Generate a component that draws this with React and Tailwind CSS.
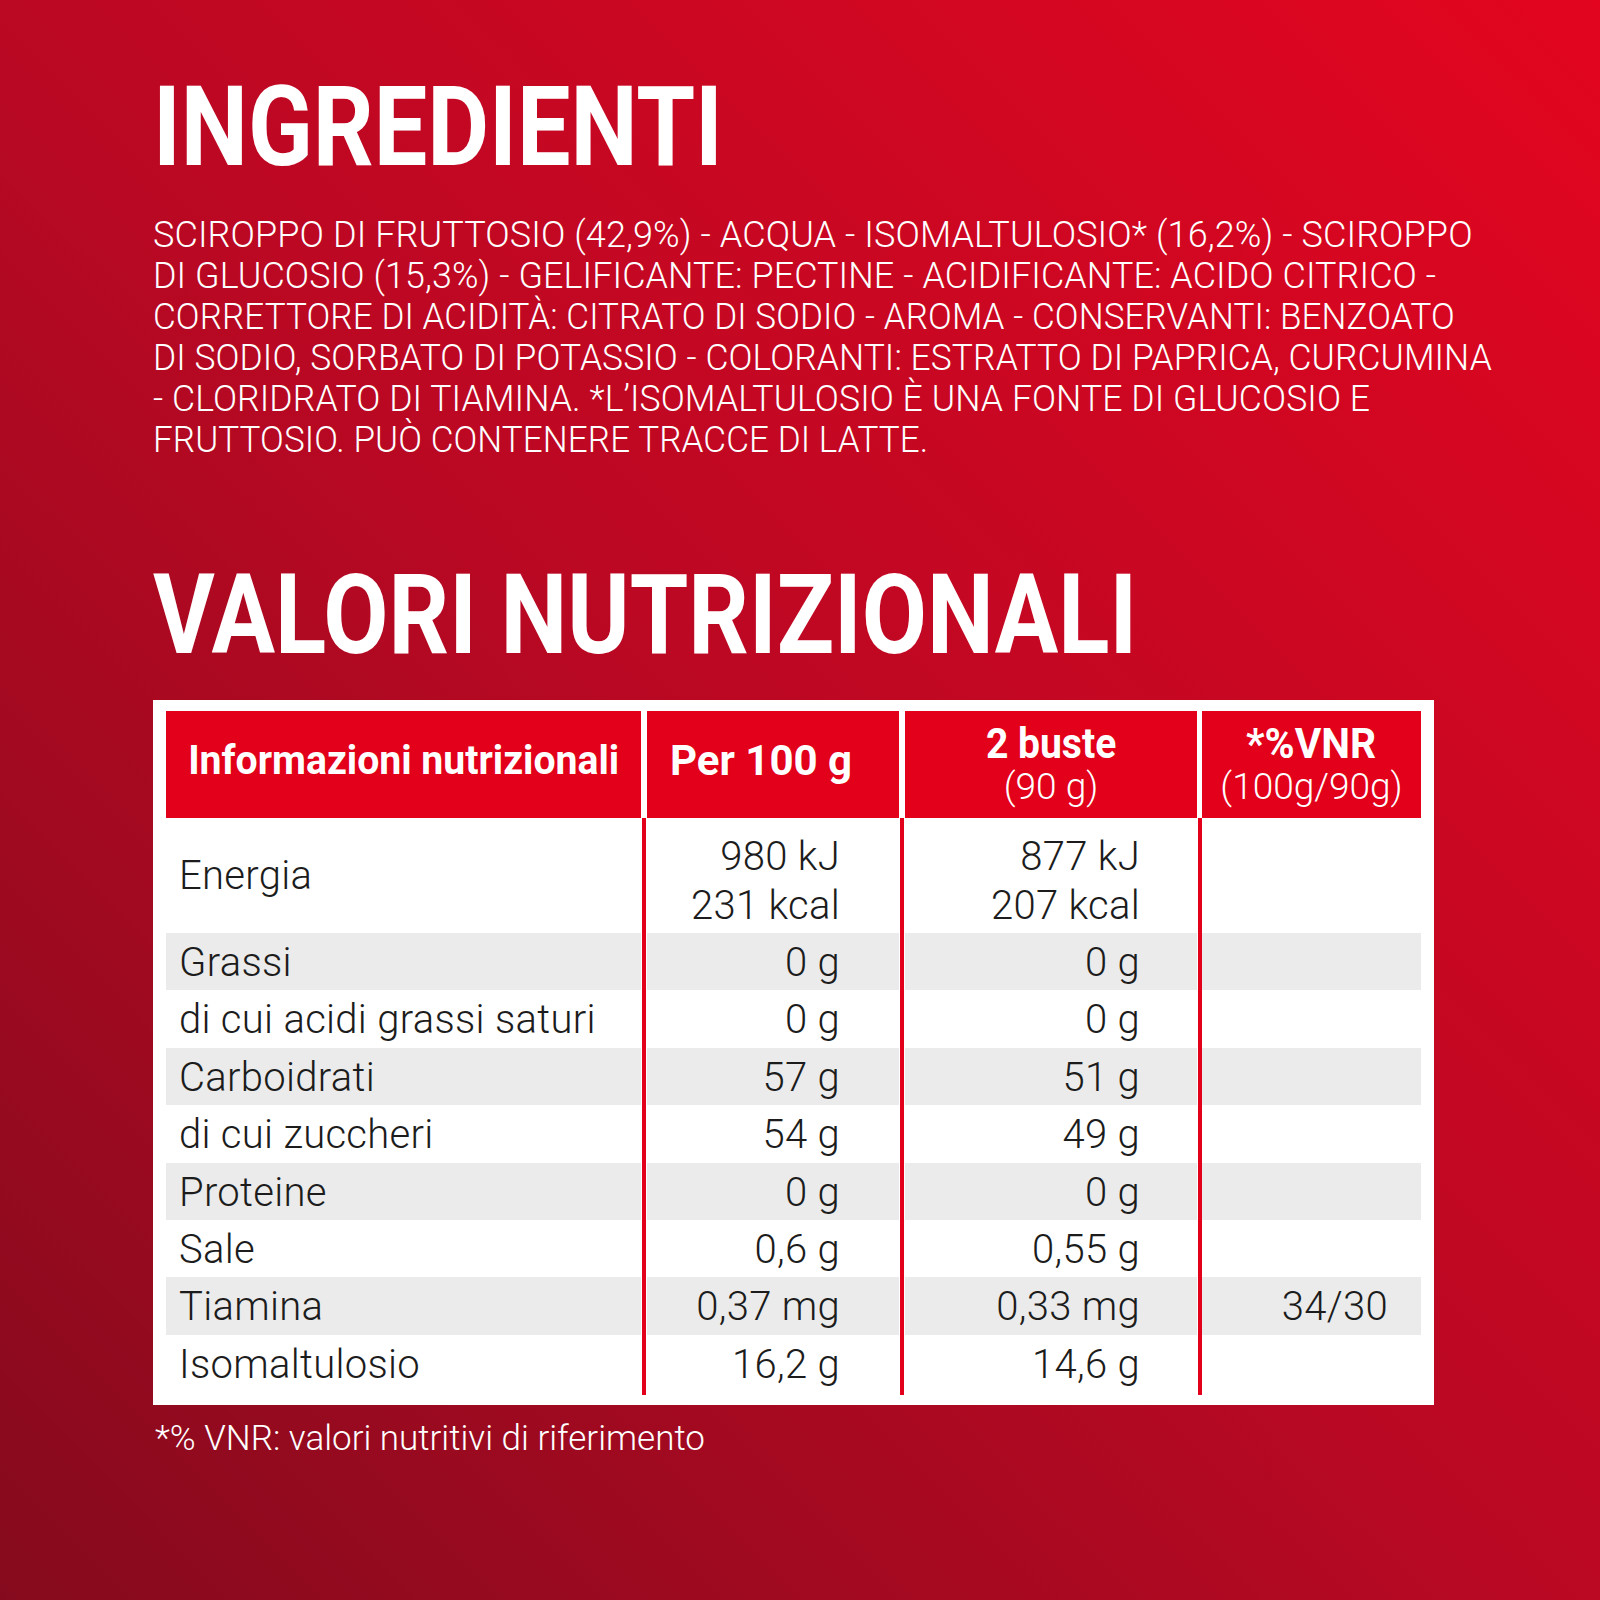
const ingredientLines = [
  ['SCIROPPO DI FRUTTOSIO (42,9%) - ACQUA - ISOMALTULOSIO* (16,2%) - SCIROPPO', 'scale-x-[1]'],
  ['DI GLUCOSIO (15,3%) - GELIFICANTE: PECTINE - ACIDIFICANTE: ACIDO CITRICO -', 'scale-x-[0.996]'],
  ['CORRETTORE DI ACIDITÀ: CITRATO DI SODIO - AROMA - CONSERVANTI: BENZOATO', 'scale-x-[0.973]'],
  ['DI SODIO, SORBATO DI POTASSIO - COLORANTI: ESTRATTO DI PAPRICA, CURCUMINA', 'scale-x-[0.982]'],
  ['- CLORIDRATO DI TIAMINA. *L’ISOMALTULOSIO È UNA FONTE DI GLUCOSIO E', 'scale-x-[0.987]'],
  ['FRUTTOSIO. PUÒ CONTENERE TRACCE DI LATTE.', 'scale-x-[0.973]'],
];

const rows = [
  { label: 'Grassi', a: '0 g', b: '0 g', c: '', gray: true },
  { label: 'di cui acidi grassi saturi', a: '0 g', b: '0 g', c: '', gray: false },
  { label: 'Carboidrati', a: '57 g', b: '51 g', c: '', gray: true },
  { label: 'di cui zuccheri', a: '54 g', b: '49 g', c: '', gray: false },
  { label: 'Proteine', a: '0 g', b: '0 g', c: '', gray: true },
  { label: 'Sale', a: '0,6 g', b: '0,55 g', c: '', gray: false },
  { label: 'Tiamina', a: '0,37 mg', b: '0,33 mg', c: '34/30', gray: true },
  { label: 'Isomaltulosio', a: '16,2 g', b: '14,6 g', c: '', gray: false },
];

const cols = 'grid grid-cols-[475px_6px_252px_6px_292px_5px_219px]';

function Sep({ line = true }) {
  return (
    <div className="flex justify-center bg-white">
      {line && <div className="w-1 bg-[#e2001a]" />}
    </div>
  );
}

function BodyRow({ gray, height, children }) {
  const bg = gray ? 'bg-[#ebebeb]' : 'bg-white';
  const [label, a, b, c] = children;
  return (
    <div className={`${cols} ${height}`}>
      <div className={`${bg} flex items-center pl-[13px]`}>{label}</div>
      <Sep />
      <div className={`${bg} flex items-center justify-end pr-[59px] text-right`}>{a}</div>
      <Sep />
      <div className={`${bg} flex items-center justify-end pr-[57px] text-right`}>{b}</div>
      <Sep />
      <div className={`${bg} flex items-center justify-end pr-[33px]`}>{c}</div>
    </div>
  );
}

export default function App() {
  return (
    <div className="w-[1600px] h-[1600px] overflow-hidden bg-linear-to-bl from-[#e3051f] via-[#bb0823] to-[#860a1d] font-['Roboto',sans-serif] text-white pl-[153px] pt-[72px]">
      <h1 className="text-[111px] font-bold leading-none">
        <span className="inline-block origin-left scale-x-[0.857]">INGREDIENTI</span>
      </h1>

      <div className="mt-[32px] text-[36px] font-light leading-[41px] tracking-[0.1px]">
        {ingredientLines.map(([l, s]) => (
          <div key={l} className={`whitespace-nowrap origin-left ${s}`}>{l}</div>
        ))}
      </div>

      <h2 className="mt-[99px] text-[111px] font-bold leading-none">
        <span className="inline-block origin-left scale-x-[0.853]">VALORI NUTRIZIONALI</span>
      </h2>

      <div className="mt-[29px] w-[1281px] bg-white pt-[11px] pl-[13px] pr-[13px] pb-[13px] text-[#1c1c1c]">
        <div className={`${cols} h-[107px] text-white`}>
          <div className="bg-[#e2001a] flex items-center justify-center">
            <span className="text-[41px] font-bold scale-x-[0.955] -mt-2">Informazioni nutrizionali</span>
          </div>
          <Sep line={false} />
          <div className="bg-[#e2001a] flex items-center justify-start pl-[23px]">
            <span className="inline-block origin-left text-[42px] font-bold -mt-2">Per 100 g</span>
          </div>
          <Sep line={false} />
          <div className="bg-[#e2001a] flex flex-col items-center justify-center">
            <span className="text-[42px] font-bold leading-[44px] scale-x-[0.93]">2 buste</span>
            <span className="text-[37px] font-light leading-[42px]">(90 g)</span>
          </div>
          <Sep line={false} />
          <div className="bg-[#e2001a] flex flex-col items-center justify-center">
            <span className="text-[42px] font-bold leading-[44px] scale-x-[0.97]">*%VNR</span>
            <span className="text-[37px] font-light leading-[42px]">(100g/90g)</span>
          </div>
        </div>

        <div className="text-[40px] font-light tracking-[0.3px]">
          <BodyRow gray={false} height="h-[115px]">
            {[
              <span key="l">Energia</span>,
              <div key="a" className="leading-[49px] pt-[10px]">980 kJ<br />231 kcal</div>,
              <div key="b" className="leading-[49px] pt-[10px]">877 kJ<br />207 kcal</div>,
              null,
            ]}
          </BodyRow>
          {rows.map((r) => (
            <BodyRow key={r.label} gray={r.gray} height="h-[57.4px]">
              {[r.label, r.a, r.b, r.c]}
            </BodyRow>
          ))}
        </div>
      </div>

      <p className="mt-[16px] ml-[2px] text-[35px] font-light leading-none">*% VNR: valori nutritivi di riferimento</p>
    </div>
  );
}
